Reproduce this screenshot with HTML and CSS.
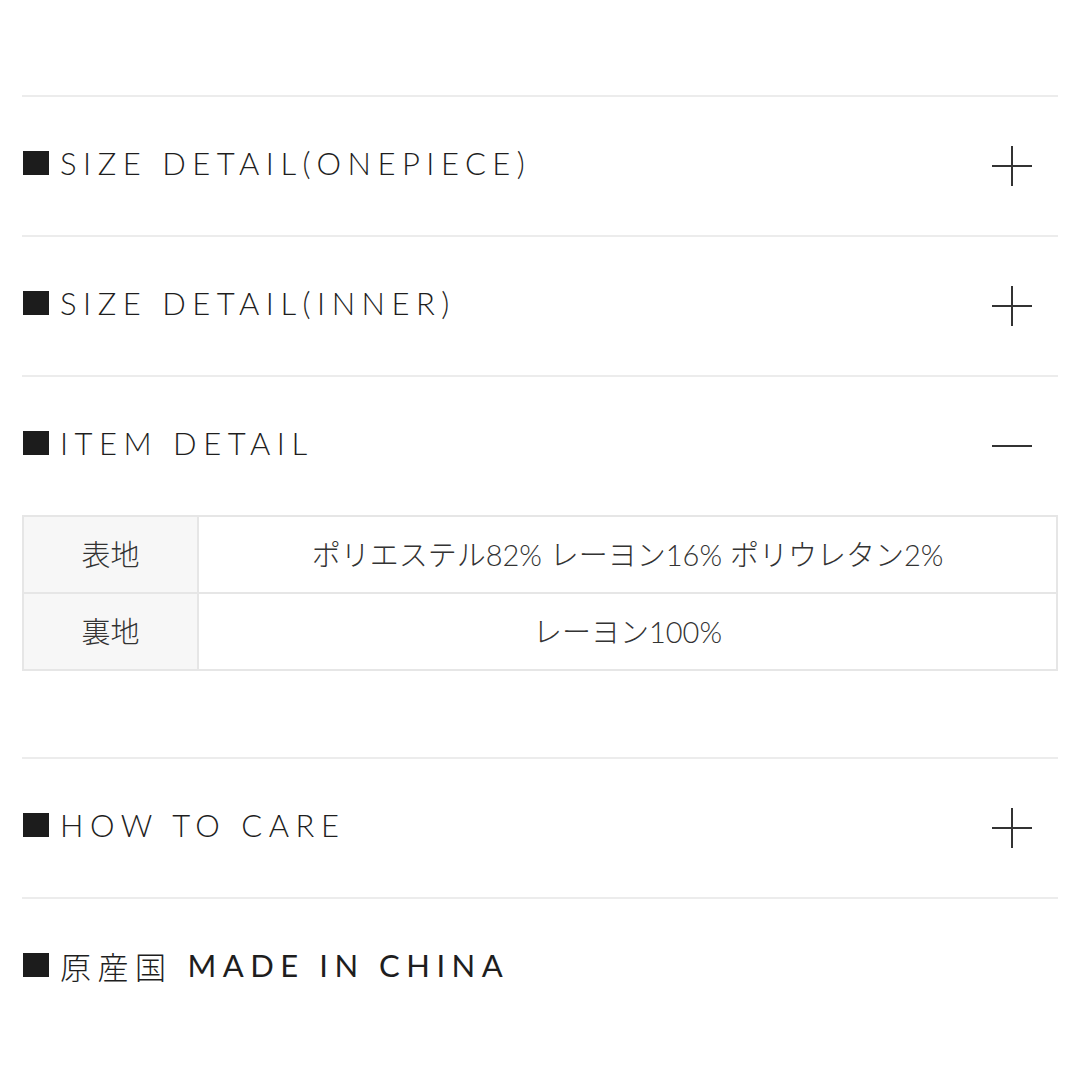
FILE: index.html
```html
<!DOCTYPE html>
<html lang="ja">
<head>
    <meta charset="UTF-8">
    <meta name="viewport" content="width=device-width, initial-scale=1.0">
    <title>Item Detail</title>
    <link rel="stylesheet" href="styles.css">
</head>
<body>
    <div class="container">
        <div class="section">
            <div class="section-head">
                <h2><span class="mark"></span>SIZE DETAIL(ONEPIECE)</h2>
                <span class="toggle plus"></span>
            </div>
        </div>
        <div class="section">
            <div class="section-head">
                <h2><span class="mark"></span>SIZE DETAIL(INNER)</h2>
                <span class="toggle plus"></span>
            </div>
        </div>
        <div class="section open">
            <div class="section-head">
                <h2><span class="mark"></span>ITEM DETAIL</h2>
                <span class="toggle"></span>
            </div>
            <table class="detail-table">
                <tr>
                    <th>表地</th>
                    <td>ポリエステル82% レーヨン16% ポリウレタン2%</td>
                </tr>
                <tr>
                    <th>裏地</th>
                    <td>レーヨン100%</td>
                </tr>
            </table>
        </div>
        <div class="section">
            <div class="section-head">
                <h2><span class="mark"></span>HOW TO CARE</h2>
                <span class="toggle plus"></span>
            </div>
        </div>
        <div class="section">
            <div class="section-head">
                <h2><span class="mark"></span>原産国&nbsp;<span class="strong">MADE IN CHINA</span></h2>
            </div>
        </div>
    </div>
</body>
</html>
```

FILE: styles.css
```css
* {
    margin: 0;
    padding: 0;
    box-sizing: border-box;
}

body {
    background: #fff;
    color: #222;
    font-family: 'Lato', 'Noto Sans CJK JP', sans-serif;
}

.container {
    padding: 95px 22px 0;
}

.section {
    border-top: 2px solid #ececec;
}

.section.open {
    padding-bottom: 86px;
}

.section-head {
    height: 138px;
    display: flex;
    align-items: center;
    justify-content: space-between;
}

.section-head h2 {
    display: flex;
    align-items: center;
    font-size: 31px;
    font-weight: 300;
    letter-spacing: 0.21em;
    color: #1e1e1e;
    margin-top: -6px;
}

.section-head h2 .strong {
    font-weight: 400;
}

.mark {
    display: inline-block;
    width: 26px;
    height: 24px;
    background: #1c1c1c;
    margin-right: 11px;
    margin-left: 1px;
}

.toggle {
    position: relative;
    width: 40px;
    height: 40px;
    margin-right: 26px;
}

.toggle::before,
.toggle::after {
    content: '';
    position: absolute;
    background: #333;
}

.toggle::before {
    left: 0;
    right: 0;
    top: 19px;
    height: 2px;
}

.toggle.plus::after {
    top: 0;
    bottom: 0;
    left: 19px;
    width: 2px;
}

.detail-table {
    width: 100%;
    border-collapse: collapse;
    font-size: 29px;
    font-weight: 300;
    color: #333;
}

.detail-table th,
.detail-table td {
    border: 2px solid #e6e6e6;
    height: 77px;
    text-align: center;
    font-weight: 300;
    padding-bottom: 3px;
}

.detail-table th {
    width: 175px;
    background: #f7f7f7;
}
```
